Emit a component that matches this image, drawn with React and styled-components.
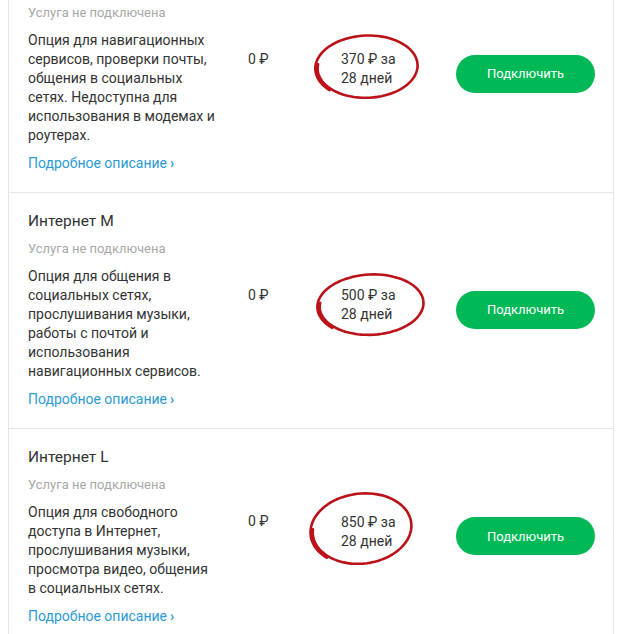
import styled, { createGlobalStyle } from 'styled-components';

const GlobalStyle = createGlobalStyle`
    html, body {
        margin: 0;
        padding: 0;
        background: #fff;
        overflow: hidden;
    }
    body {
        font-family: Roboto, 'Noto Sans', 'DejaVu Sans', sans-serif;
        color: #333;
    }
`;

const Page = styled.div`
    height: 634px;
    overflow: hidden;
`;

const List = styled.div`
    margin-left: 8px;
    margin-top: -15px;
    width: 606px;
    box-sizing: border-box;
    border-left: 1px solid #e6e6e6;
    border-right: 1px solid #e6e6e6;
`;

const Card = styled.section`
    padding: 18px 17px 19px 19px;
    border-bottom: 1px solid #e6e6e6;
`;

const Title = styled.h3`
    margin: 0 0 8px;
    font-size: 15.5px;
    line-height: 20px;
    font-weight: 400;
    color: #333;
`;

const Status = styled.div`
    font-size: 13px;
    line-height: 20px;
    color: #a8a8a8;
    margin-bottom: 8px;
`;

const Row = styled.div`
    display: grid;
    grid-template-columns: 220px 93px 115px 139px;
    align-items: center;
`;

const Description = styled.p`
    margin: 0;
    font-size: 14px;
    line-height: 19px;
    color: #333;
`;

const Zero = styled.div`
    font-size: 14px;
    line-height: 19px;
    margin-bottom: 58px;
`;

const Price = styled.div`
    position: relative;
    font-size: 14px;
    line-height: 19px;
    margin-bottom: 38px;
`;

const Oval = styled.svg`
    position: absolute;
    pointer-events: none;
    overflow: visible;
`;

const Button = styled.button`
    height: 38px;
    width: 139px;
    margin-bottom: 29px;
    border: none;
    border-radius: 19px;
    background: #00b956;
    color: #fff;
    font-family: inherit;
    font-size: 13px;
    cursor: pointer;
`;

const More = styled.a`
    display: inline-block;
    margin-top: 9px;
    font-size: 14px;
    line-height: 19px;
    color: #2b9ad4;
    text-decoration: none;
`;

const Chevron = styled.span`
    font-weight: 700;
    margin-left: 3px;
`;

// рисуем "от руки" красный овал вокруг цены
function ovalPath(w, h, tilt) {
    const cx = w / 2;
    const cy = h / 2;
    const pts = [];
    const start = 2.4;
    const steps = 90;
    for (let i = 0; i <= steps; i++) {
        const k = i / steps;
        const t = start + k * (Math.PI * 2 + 0.9);
        const s = 1 - 0.05 * k;
        let x = Math.cos(t) * (w / 2 - 2) * s;
        let y = Math.sin(t) * (h / 2 - 2) * s;
        const rx = x * Math.cos(tilt) - y * Math.sin(tilt);
        const ry = x * Math.sin(tilt) + y * Math.cos(tilt);
        pts.push(`${(cx + rx).toFixed(1)},${(cy + ry).toFixed(1)}`);
    }
    return 'M' + pts.join(' L');
}

// первая карточка прокручена, её заголовок за краем экрана
const tariffs = [
    {
        id: 's',
        title: null,
        lines: [
            'Опция для навигационных',
            'сервисов, проверки почты,',
            'общения в социальных',
            'сетях. Недоступна для',
            'использования в модемах и',
            'роутерах.',
        ],
        price: '370',
        oval: { left: -28, top: -17, w: 108, h: 68, tilt: -0.04 },
    },
    {
        id: 'm',
        title: 'Интернет M',
        lines: [
            'Опция для общения в',
            'социальных сетях,',
            'прослушивания музыки,',
            'работы с почтой и',
            'использования',
            'навигационных сервисов.',
        ],
        price: '500',
        oval: { left: -26, top: -14, w: 112, h: 66, tilt: -0.05 },
    },
    {
        id: 'l',
        title: 'Интернет L',
        lines: [
            'Опция для свободного',
            'доступа в Интернет,',
            'прослушивания музыки,',
            'просмотра видео, общения',
            'в социальных сетях.',
        ],
        price: '850',
        oval: { left: -33, top: -22, w: 107, h: 76, tilt: -0.12 },
    },
];

function Tariff({ t }) {
    const o = t.oval;
    return (
        <Card>
            {t.title && <Title>{t.title}</Title>}
            <Status>Услуга не подключена</Status>
            <Row>
                <Description>
                    {t.lines.map((l, i) => (
                        <span key={i}>
                            {l}
                            {i < t.lines.length - 1 && <br />}
                        </span>
                    ))}
                </Description>
                <Zero>0 ₽</Zero>
                <Price>
                    {t.price} ₽ за
                    <br />
                    28 дней
                    <Oval
                        width={o.w}
                        height={o.h}
                        style={{ left: o.left, top: o.top }}
                    >
                        <path
                            d={ovalPath(o.w, o.h, o.tilt)}
                            fill="none"
                            stroke="#bb1219"
                            strokeWidth="2.6"
                            strokeLinejoin="round"
                            strokeLinecap="round"
                        />
                    </Oval>
                </Price>
                <Button>Подключить</Button>
            </Row>
            <More href="#">
                Подробное описание<Chevron>›</Chevron>
            </More>
        </Card>
    );
}

export default function App() {
    return (
        <Page>
            <GlobalStyle />
            <List>
                {tariffs.map((t) => (
                    <Tariff key={t.id} t={t} />
                ))}
            </List>
        </Page>
    );
}
